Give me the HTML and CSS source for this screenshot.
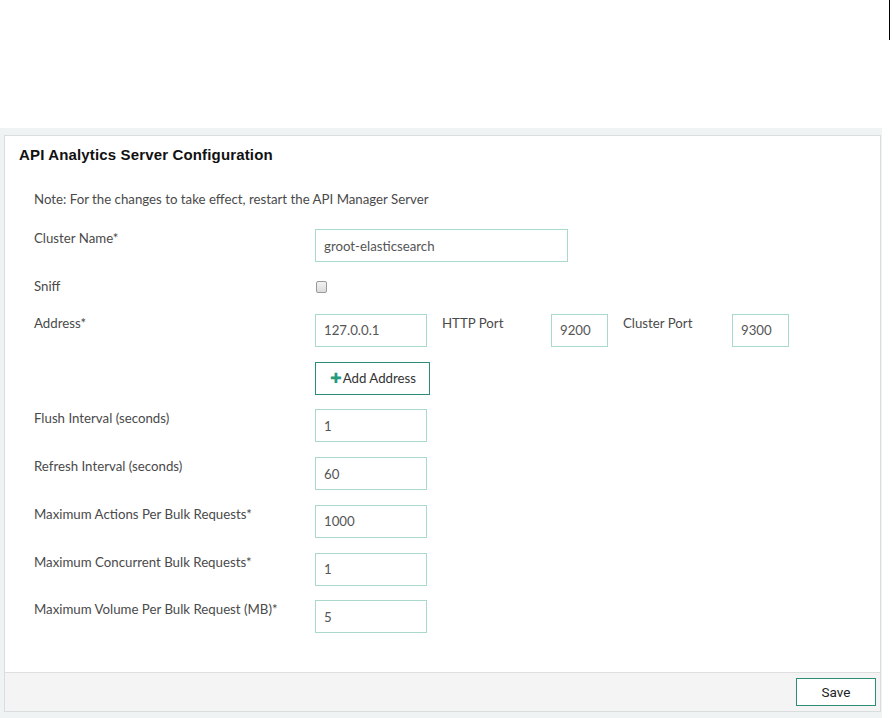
FILE: index.html
```html
<!DOCTYPE html>
<html>
<head>
<meta charset="utf-8">
<link rel="stylesheet" href="styles.css">
</head>
<body>
<div class="top"><span class="caret"></span></div>
<div class="wrap">
  <div class="card">
    <div class="card-head"><h2>API Analytics Server Configuration</h2></div>
    <div class="card-body">
      <p class="note">Note: For the changes to take effect, restart the API Manager Server</p>
      <div class="row">
        <label class="lbl">Cluster Name*</label>
        <input class="inp wide" type="text" value="groot-elasticsearch">
      </div>
      <div class="row sniff">
        <label class="lbl">Sniff</label>
        <span class="chk"></span>
      </div>
      <div class="row">
        <label class="lbl">Address*</label>
        <input class="inp mid" type="text" value="127.0.0.1">
        <span class="sub">HTTP Port</span>
        <input class="inp port" type="text" value="9200">
        <span class="sub">Cluster Port</span>
        <input class="inp port" type="text" value="9300">
      </div>
      <div class="row">
        <span class="lbl"></span>
        <button class="add"><span class="plus">&#10010;</span>Add Address</button>
      </div>
      <div class="row">
        <label class="lbl">Flush Interval (seconds)</label>
        <input class="inp mid" type="text" value="1">
      </div>
      <div class="row">
        <label class="lbl">Refresh Interval (seconds)</label>
        <input class="inp mid" type="text" value="60">
      </div>
      <div class="row">
        <label class="lbl">Maximum Actions Per Bulk Requests*</label>
        <input class="inp mid" type="text" value="1000">
      </div>
      <div class="row">
        <label class="lbl">Maximum Concurrent Bulk Requests*</label>
        <input class="inp mid" type="text" value="1">
      </div>
      <div class="row last">
        <label class="lbl">Maximum Volume Per Bulk Request (MB)*</label>
        <input class="inp mid" type="text" value="5">
      </div>
    </div>
    <div class="card-foot">
      <button class="save">Save</button>
    </div>
  </div>
</div>
</body>
</html>
```

FILE: styles.css
```css
* { box-sizing: border-box; }
html, body { margin: 0; padding: 0; background: #fff; }
body { font-family: Lato, "Noto Sans", sans-serif; font-size: 13.25px; color: #4a4a4a; }

.top { height: 128px; position: relative; }
.caret { position: absolute; left: 889px; top: 0; width: 1px; height: 40px; background: #000; }

.wrap {
  width: 882px;
  padding: 7px 1px 7px 4px;
  background: #eff3f3;
}
.card { background: #fff; border: 1px solid #dadddd; }

.card-head { padding: 10px 14px 0; }
.card-head h2 {
  margin: 0;
  font-family: "Liberation Sans", Arial, sans-serif;
  font-weight: bold;
  font-size: 15px;
  line-height: 18px;
  color: #111;
  letter-spacing: 0.15px;
}

.card-body { padding: 26px 0 39px 29px; }
.note { margin: 0 0 21px; line-height: 18px; }

.row { display: flex; align-items: flex-start; margin-bottom: 14.75px; }
.row.last { margin-bottom: 0; }
.row.sniff { height: 22px; margin-bottom: 15px; }
.lbl { width: 281px; flex: none; line-height: 18px; }

.inp {
  height: 33px;
  border: 1px solid #a9d9cd;
  border-radius: 0;
  padding: 0 8px;
  font-family: Lato, "Noto Sans", sans-serif;
  font-size: 13.25px;
  color: #555;
  background: #fff;
  outline: none;
  margin: 0;
}
.inp.wide { width: 253px; }
.inp.mid { width: 112px; }
.inp.port { width: 57px; }

.sub { width: 109px; flex: none; margin-left: 15px; line-height: 18px; }

.chk {
  display: block;
  width: 11px;
  height: 12px;
  margin: 4px 0 0 1px;
  border: 1px solid #9a9a9a;
  border-radius: 2px;
  background: linear-gradient(#f2f2f2, #dcdcdc);
}

.add {
  height: 33px;
  width: 115px;
  border: 1px solid #2c8c78;
  background: #fff;
  padding: 0 0 0 1px;
  margin: 0;
  font-family: Lato, "Noto Sans", sans-serif;
  font-size: 13.25px;
  color: #333;
  display: flex;
  align-items: center;
  justify-content: center;
}
.plus { color: #2a9a7e; font-size: 14px; margin-right: 1px; font-family: "DejaVu Sans", sans-serif; font-weight: bold; line-height: 1; }

.card-foot {
  border-top: 1px solid #dedede;
  background: #f4f4f4;
  height: 39px;
  padding: 5px 4px 0 0;
  display: flex;
  justify-content: flex-end;
}
.save {
  width: 80px;
  height: 28px;
  border: 1px solid #2c8c78;
  background: #fff;
  font-family: "Roboto", "Liberation Sans", sans-serif;
  font-size: 13.5px;
  color: #222;
  margin: 0;
  padding: 0;
}
```
